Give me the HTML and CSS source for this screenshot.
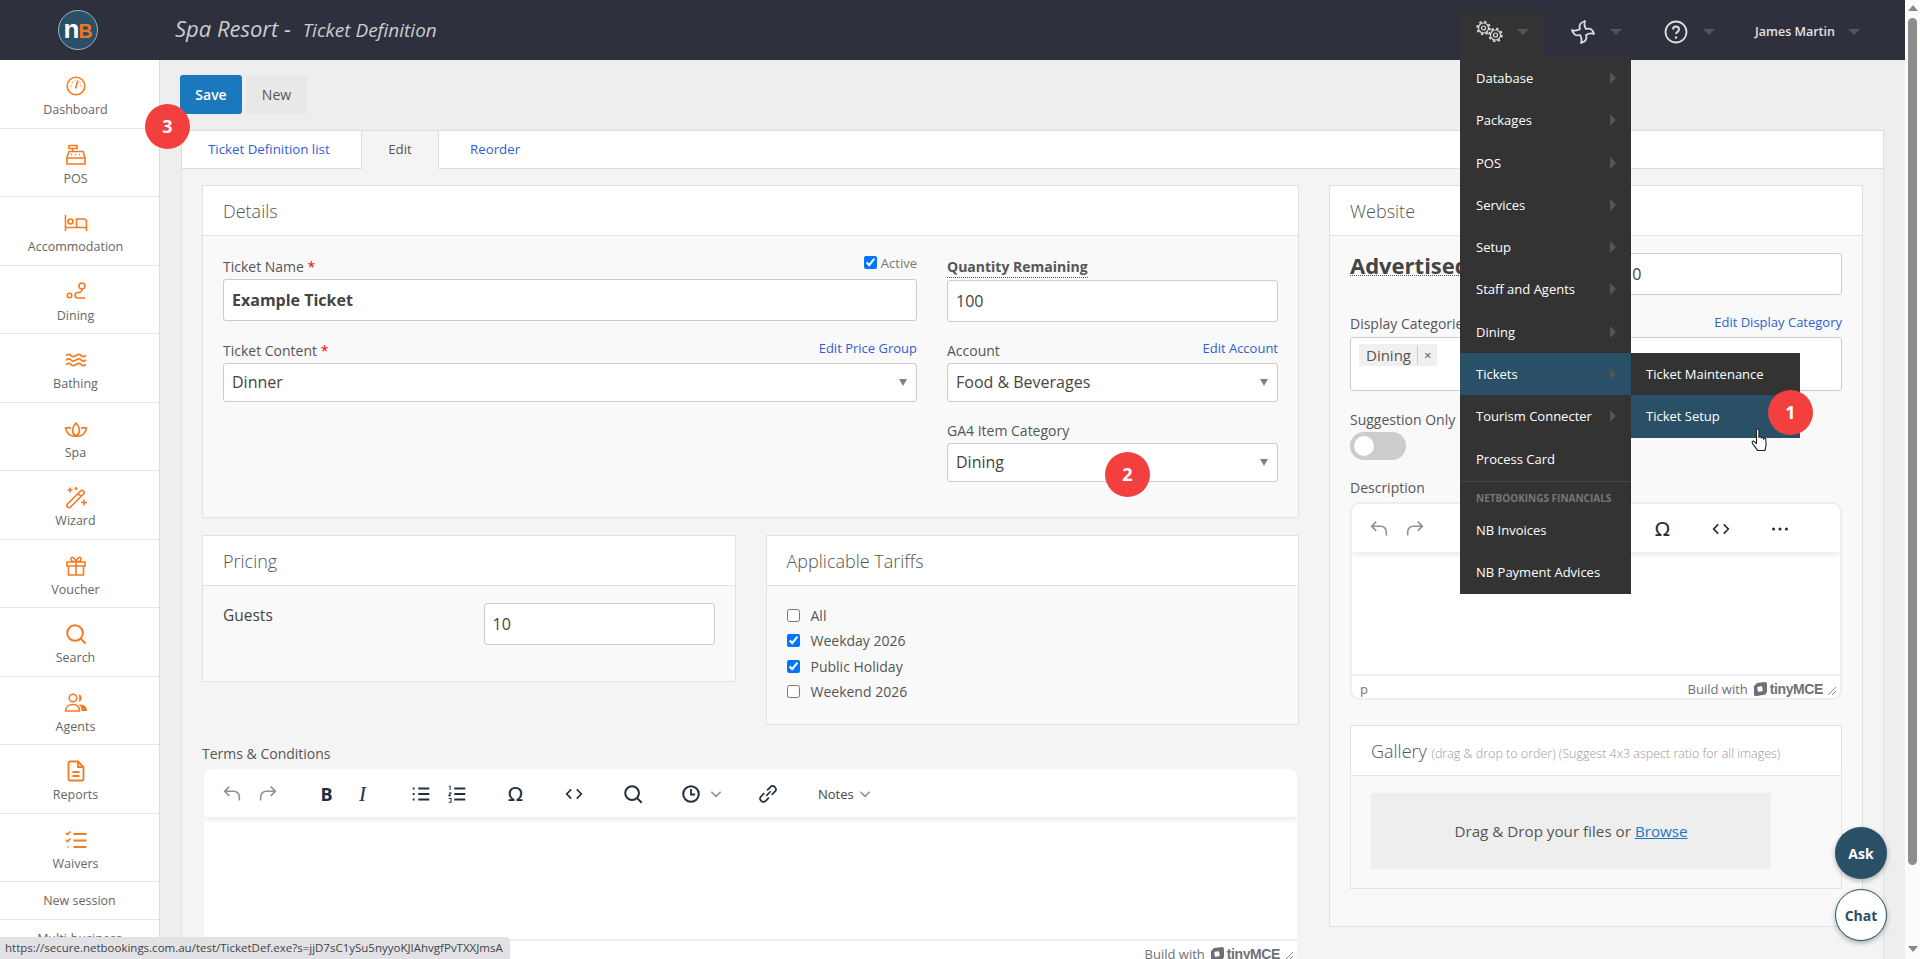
FILE: index.html
```html
<!DOCTYPE html>
<html>
<head>
    <title>Spa Resort - Ticket Definition</title>
    <meta name="viewport" content="width=device-width, initial-scale=1">
    <link rel="stylesheet" href="styles.css">
</head>
<body>
<div class="app">
    <div class="page">
        <header class="topbar">
            <div class="logo"><span class="logo-n">n</span><span class="logo-b">B</span></div>
            <div class="page-title"><span class="title-big">Spa Resort - </span><span class="title-small">Ticket Definition</span></div>
            <nav class="top-nav">
                <div class="top-item top-gears">
                    <svg width="27" height="24" viewBox="0 0 27 24" fill="none" stroke="#ddd"><circle cx="7.500" cy="8" r="6.400" stroke-width="1.600" stroke-dasharray="2.500 2.500"/><circle cx="7.500" cy="8" r="5" stroke-width="1.200"/><circle cx="7.500" cy="8" r="2" stroke-width="1.200"/><circle cx="19.500" cy="15" r="6.400" stroke-width="1.600" stroke-dasharray="2.500 2.500"/><circle cx="19.500" cy="15" r="5" stroke-width="1.200"/><circle cx="19.500" cy="15" r="2" stroke-width="1.200"/></svg>
                    <span class="caret"></span>
                </div>
                <div class="top-item top-fan">
                    <svg width="24" height="24" viewBox="0 0 24 24" fill="none" stroke="#ddd" stroke-width="1.800" stroke-linejoin="round"><path d="M9 9Q7 3 14 1Q12.500 5 15 9Q21 7 23 14Q19 12.500 15 15Q17 21 10 23Q11.500 19 9 15Q3 17 1 10Q5 11.500 9 9Z"/></svg>
                    <span class="caret"></span>
                </div>
                <div class="top-item top-help">
                    <svg width="24" height="24" viewBox="0 0 24 24" fill="none" stroke="#ddd" stroke-width="1.800"><circle cx="12" cy="12" r="10.500"/><path d="M9 9.500c0-4 6-4 6 0 0 2.500-3 2.200-3 4.500" stroke-width="2"/><circle cx="12" cy="17.500" r="1.200" fill="#ddd" stroke="none"/></svg>
                    <span class="caret"></span>
                </div>
                <div class="top-item top-user">
                    <span class="user-name">James Martin</span>
                    <span class="caret"></span>
                </div>
            </nav>
        </header>

        <div class="layout">
            <aside class="sidebar">
                <a class="nav-item">
                    <svg class="nav-icon" viewBox="0 0 24 24"><circle cx="12" cy="12" r="8.800"/><path d="M11.500 14.500l2.500-8M6.500 12h1M16.500 12h1M8 8l.7.7M11.500 5.800v.7M16.500 8l-.5.5"/></svg>
                    <span>Dashboard</span>
                </a>
                <a class="nav-item">
                    <svg class="nav-icon" viewBox="0 0 24 24"><path d="M5 2.500h8v3H5zM8.500 5.500v3M5 8.500h14l2 6v6.500H3v-6.500zM3 15h18M7 11.500h1M11 11.500h1M15 11.500h1"/></svg>
                    <span>POS</span>
                </a>
                <a class="nav-item">
                    <svg class="nav-icon" viewBox="0 0 24 24"><path d="M1.500 4v16M1.500 16.500h21M22.500 20v-9a3 3 0 0 0-3-3h-7v8.500"/><circle cx="6.500" cy="10.500" r="2.500"/></svg>
                    <span>Accommodation</span>
                </a>
                <a class="nav-item">
                    <svg class="nav-icon" viewBox="0 0 24 24"><circle cx="18" cy="6" r="3"/><circle cx="5.500" cy="15.500" r="2.200"/><path d="M18 9c0 3-2 3.500-4 3.500s-3 1.200-3 2.700 1 2.800 3 2.800h7"/></svg>
                    <span>Dining</span>
                </a>
                <a class="nav-item">
                    <svg class="nav-icon" viewBox="0 0 24 24"><path d="M2 7.500c2.500-1.500 4-1.500 5 0s2.500 1.500 5 0 4-1.500 5 0 2.500 1.500 5 0M2 12c2.500-1.500 4-1.500 5 0s2.500 1.500 5 0 4-1.500 5 0 2.500 1.500 5 0M2 16.500c2.500-1.500 4-1.500 5 0s2.500 1.500 5 0 4-1.500 5 0 2.500 1.500 5 0"/></svg>
                    <span>Bathing</span>
                </a>
                <a class="nav-item">
                    <svg class="nav-icon" viewBox="0 0 24 24"><path d="M12 19c-4-2-5-8 0-13 5 5 4 11 0 13zM12 19c-5 1-9.500-2-10.500-8 2-.5 4-.5 5.500.3M12 19c5 1 9.500-2 10.500-8-2-.5-4-.5-5.500.3"/></svg>
                    <span>Spa</span>
                </a>
                <a class="nav-item">
                    <svg class="nav-icon" viewBox="0 0 24 24"><path d="M3.500 19l13-13a2 2 0 0 1 3 3l-13 13a2 2 0 0 1-3-3zM14 8.500l3 3M6 2.500v5M3.500 5h5M12 2v3M10.500 3.500h3M20 14.500v6M17 17.500h6"/></svg>
                    <span>Wizard</span>
                </a>
                <a class="nav-item">
                    <svg class="nav-icon" viewBox="0 0 24 24"><path d="M3 8h18v4H3zM4.500 12v9h15v-9M12 8v13M12 8C8 8 6.500 6.500 7 4.500S10.500 2.500 12 8zM12 8c4 0 5.500-1.500 5-3.500S13.500 2.500 12 8z"/></svg>
                    <span>Voucher</span>
                </a>
                <a class="nav-item">
                    <svg class="nav-icon" viewBox="0 0 24 24"><circle cx="11" cy="11" r="7.800" stroke-width="2"/><path d="M16.500 16.500l5 5" stroke-width="2"/></svg>
                    <span>Search</span>
                </a>
                <a class="nav-item">
                    <svg class="nav-icon" viewBox="0 0 24 24"><circle cx="9" cy="7" r="3.800"/><path d="M1.500 20c0-4 3-6.500 7.500-6.500s6.500 2.500 6.500 6.500z"/><path class="solid" d="M14.500 3.300a3.800 3.800 0 0 1 0 7.500c1-2 1-5.500 0-7.500zM17 13.500c3.500.3 6 2.500 6 6.500h-5.500c0-2.500-.5-5-2.500-6.500z"/></svg>
                    <span>Agents</span>
                </a>
                <a class="nav-item">
                    <svg class="nav-icon" viewBox="0 0 24 24"><path d="M6 2.500h8l5.500 5.500v12a1.500 1.500 0 0 1-1.500 1.500H6A1.500 1.500 0 0 1 4.500 20V4A1.500 1.500 0 0 1 6 2.500zM14 2.500V8h5.500M8.500 13h7M8.500 17h7" stroke-width="1.800"/></svg>
                    <span>Reports</span>
                </a>
                <a class="nav-item">
                    <svg class="nav-icon" viewBox="0 0 24 24"><path d="M9.500 6h13M9.500 12.500h13M9.500 19h13M3.500 19h1" stroke-width="2"/><path d="M2 5l1.500 1.500L6.500 3.500M2 12l1.500 1.500 3-3"/></svg>
                    <span>Waivers</span>
                </a>
                <a class="nav-link">New session</a>
                <a class="nav-link">Multi-business</a>
            </aside>

            <main class="main">
                <div class="actions">
                    <button class="btn btn-primary">Save</button>
                    <button class="btn btn-plain">New</button>
                </div>
                <div class="tabs">
                    <a class="tab tab-link tab-first">Ticket Definition list</a>
                    <a class="tab tab-active">Edit</a>
                    <a class="tab tab-link tab-last">Reorder</a>
                </div>
                <div class="tab-panel">
                    <div class="col-left">
                        <section class="card">
                            <h3 class="card-head">Details</h3>
                            <div class="card-body details-grid">
                                <div class="stack">
                                    <div class="label-row">
                                        <label>Ticket Name <b class="req">*</b></label>
                                        <label class="check-small"><input type="checkbox" checked> Active</label>
                                    </div>
                                    <input class="input input-bold" type="text" value="Example Ticket">
                                    <div class="label-row row-spaced">
                                        <label>Ticket Content <b class="req">*</b></label>
                                        <a class="edit-link">Edit Price Group</a>
                                    </div>
                                    <div class="select">Dinner</div>
                                </div>
                                <div class="stack">
                                    <div class="label-row row-qty">
                                        <label class="label-strong">Quantity Remaining</label>
                                    </div>
                                    <input class="input" type="text" value="100">
                                    <div class="label-row row-account">
                                        <label>Account</label>
                                        <a class="edit-link">Edit Account</a>
                                    </div>
                                    <div class="select">Food &amp; Beverages</div>
                                    <div class="label-row row-ga4">
                                        <label>GA4 Item Category</label>
                                    </div>
                                    <div class="select">Dining</div>
                                </div>
                            </div>
                        </section>

                        <div class="card-row">
                            <section class="card">
                                <h3 class="card-head">Pricing</h3>
                                <div class="card-body pricing-body">
                                    <span class="guests">Guests</span>
                                    <input class="input input-guests" type="text" value="10">
                                </div>
                            </section>
                            <section class="card">
                                <h3 class="card-head">Applicable Tariffs</h3>
                                <div class="card-body tariffs-body">
                                    <label class="tariff"><input type="checkbox"> All</label>
                                    <label class="tariff"><input type="checkbox" checked> Weekday 2026</label>
                                    <label class="tariff"><input type="checkbox" checked> Public Holiday</label>
                                    <label class="tariff"><input type="checkbox"> Weekend 2026</label>
                                </div>
                            </section>
                        </div>

                        <div class="terms-label">Terms &amp; Conditions</div>
                        <div class="editor">
                            <div class="toolbar">
                                <div class="tb-group">
                                    <span class="tb-btn"><svg class="tb-icon tb-dim" viewBox="0 0 24 24"><path d="M9 4L4 9l5 5M4 9h10a6 6 0 0 1 6 6v4"/></svg></span>
                                    <span class="tb-btn"><svg class="tb-icon tb-dim" viewBox="0 0 24 24"><path d="M15 4l5 5-5 5M20 9H10a6 6 0 0 0-6 6v4"/></svg></span>
                                </div>
                                <div class="tb-group">
                                    <span class="tb-btn tb-bold">B</span>
                                    <span class="tb-btn tb-italic">I</span>
                                </div>
                                <div class="tb-group">
                                    <span class="tb-btn"><svg class="tb-icon" viewBox="0 0 24 24"><path d="M9 6h12M9 12h12M9 18h12M3 6h2M3 12h2M3 18h2" stroke-width="2.200"/></svg></span>
                                    <span class="tb-btn"><svg class="tb-icon" viewBox="0 0 24 24"><path d="M9 6h12M9 12h12M9 18h12" stroke-width="2.200"/><path d="M3 3.500h1.500v4M3 11h2.500L3 14h2.500M3 17h2.500v4H3" stroke-width="1.100"/></svg></span>
                                </div>
                                <div class="tb-group"><span class="tb-btn tb-omega">Ω</span></div>
                                <div class="tb-group">
                                    <span class="tb-btn"><svg class="tb-icon" viewBox="0 0 24 24"><path d="M9 7l-5 5 5 5M15 7l5 5-5 5" stroke-width="1.800"/></svg></span>
                                </div>
                                <div class="tb-group">
                                    <span class="tb-btn"><svg class="tb-icon" viewBox="0 0 24 24"><circle cx="11" cy="11" r="7.500" stroke-width="2.200"/><path d="M16.500 16.500l5 5" stroke-width="2.200"/></svg></span>
                                </div>
                                <div class="tb-group">
                                    <span class="tb-btn"><svg class="tb-icon" viewBox="0 0 24 24"><circle cx="12" cy="12" r="8.500" stroke-width="2.200"/><path d="M12 6.500V12.500h4.500" stroke-width="2"/></svg></span>
                                    <svg class="tb-chevron tb-chevron-clock" viewBox="0 0 12 12"><path d="M2 4l4 4 4-4"/></svg>
                                </div>
                                <div class="tb-group">
                                    <span class="tb-btn"><svg class="tb-icon" viewBox="0 0 24 24"><path d="M10 14l5-5M8 11l-3.500 3.500a3.500 3.500 0 0 0 5 5L13 16M16 13l3.500-3.500a3.500 3.500 0 0 0-5-5L11 8" stroke-width="1.800"/></svg></span>
                                </div>
                                <div class="tb-notes">Notes <svg class="tb-chevron" viewBox="0 0 12 12"><path d="M2 4l4 4 4-4"/></svg></div>
                            </div>
                            <div class="editor-body"></div>
                            <div class="editor-status">
                                <span class="path-tag"></span>
                                <span class="build-with">Build with</span>
                                <svg class="tiny-logo" viewBox="0 0 14 14"><path d="M4 1l8-1a2 2 0 0 1 2 2v8l-1.500 2.500L4 14a2 2 0 0 1-3-2V4z"/><rect x="4.500" y="4.500" width="5" height="5" rx="1" fill="#fff" transform="rotate(-10 7 7)"/></svg>
                                <span class="tiny-name">tinyMCE</span>
                                <svg class="resize" viewBox="0 0 10 10"><path d="M1 9l8-8M5 9l4-4"/></svg>
                            </div>
                        </div>
                    </div>

                    <section class="card col-right">
                        <h3 class="card-head">Website</h3>
                        <div class="card-body website-body">
                            <div class="advertised">
                                <span class="advertised-label">Advertised Price</span>
                                <input class="input input-price" type="text" value="10">
                            </div>
                            <div class="label-row row-cats">
                                <label>Display Categories</label>
                                <a class="edit-link">Edit Display Category</a>
                            </div>
                            <div class="multi">
                                <span class="tag"><span class="tag-text">Dining</span><span class="tag-x">×</span></span>
                            </div>
                            <div class="label-row row-suggest"><label>Suggestion Only</label></div>
                            <span class="toggle"><span class="knob"></span></span>
                            <div class="label-row row-desc"><label>Description</label></div>
                            <div class="editor">
                                <div class="toolbar">
                                    <div class="tb-group">
                                        <span class="tb-btn"><svg class="tb-icon tb-dim" viewBox="0 0 24 24"><path d="M9 4L4 9l5 5M4 9h10a6 6 0 0 1 6 6v4"/></svg></span>
                                        <span class="tb-btn"><svg class="tb-icon tb-dim" viewBox="0 0 24 24"><path d="M15 4l5 5-5 5M20 9H10a6 6 0 0 0-6 6v4"/></svg></span>
                                    </div>
                                    <div class="tb-group">
                                        <span class="tb-btn tb-bold">B</span>
                                        <span class="tb-btn tb-italic">I</span>
                                    </div>
                                    <div class="tb-group">
                                        <span class="tb-btn"></span>
                                        <span class="tb-btn"></span>
                                    </div>
                                    <div class="tb-group"><span class="tb-btn tb-omega">Ω</span></div>
                                    <div class="tb-group">
                                        <span class="tb-btn"><svg class="tb-icon" viewBox="0 0 24 24"><path d="M9 7l-5 5 5 5M15 7l5 5-5 5" stroke-width="1.800"/></svg></span>
                                    </div>
                                    <div class="tb-group">
                                        <span class="tb-btn"><svg class="tb-icon" viewBox="0 0 24 24"><circle cx="5" cy="12" r="1.700" class="solid"/><circle cx="12" cy="12" r="1.700" class="solid"/><circle cx="19" cy="12" r="1.700" class="solid"/></svg></span>
                                    </div>
                                </div>
                                <div class="editor-body"></div>
                                <div class="editor-status">
                                    <span class="path-tag">p</span>
                                    <span class="build-with">Build with</span>
                                    <svg class="tiny-logo" viewBox="0 0 14 14"><path d="M4 1l8-1a2 2 0 0 1 2 2v8l-1.500 2.500L4 14a2 2 0 0 1-3-2V4z"/><rect x="4.500" y="4.500" width="5" height="5" rx="1" fill="#fff" transform="rotate(-10 7 7)"/></svg>
                                    <span class="tiny-name">tinyMCE</span>
                                    <svg class="resize" viewBox="0 0 10 10"><path d="M1 9l8-8M5 9l4-4"/></svg>
                                </div>
                            </div>
                            <section class="card gallery">
                                <h3 class="card-head">Gallery <small>(drag &amp; drop to order) (Suggest 4x3 aspect ratio for all images)</small></h3>
                                <div class="card-body gallery-body">
                                    <div class="dropzone">Drag &amp; Drop your files or&nbsp;<a class="browse">Browse</a></div>
                                </div>
                            </section>
                        </div>
                    </section>
                </div>
            </main>
        </div>
    </div>

    <div class="scrollbar">
        <span class="sb-up"></span>
        <span class="sb-thumb"></span>
        <span class="sb-down"></span>
    </div>

    <!-- open admin menu -->
    <div class="menu">
        <a class="menu-item has-sub">Database</a>
        <a class="menu-item has-sub">Packages</a>
        <a class="menu-item has-sub">POS</a>
        <a class="menu-item has-sub">Services</a>
        <a class="menu-item has-sub">Setup</a>
        <a class="menu-item has-sub">Staff and Agents</a>
        <a class="menu-item has-sub">Dining</a>
        <a class="menu-item has-sub menu-on">Tickets</a>
        <a class="menu-item has-sub">Tourism Connecter</a>
        <a class="menu-item">Process Card</a>
        <div class="menu-heading">NETBOOKINGS FINANCIALS</div>
        <a class="menu-item">NB Invoices</a>
        <a class="menu-item">NB Payment Advices</a>
        <div class="submenu">
            <a class="menu-item">Ticket Maintenance</a>
            <a class="menu-item menu-on">Ticket Setup</a>
        </div>
    </div>

    <span class="badge badge-1">1</span>
    <span class="badge badge-2">2</span>
    <span class="badge badge-3">3</span>

    <svg class="hand" viewBox="0 0 18 25" fill="#fff" stroke="#222" stroke-width="1.100" stroke-linejoin="round"><path d="M5.500 2.200c0-1.600 2.400-1.600 2.400 0v7.300c0-1.500 2.300-1.500 2.300 0v.8c0-1.400 2.300-1.400 2.300 0v.9c0-1.300 2.300-1.300 2.300 0 .6 4 .6 7-.8 11.300H6.500C5 19.500 2.500 18 1.300 15c-.7-1.600 1-2.500 2-1.300l2.200 2z"/></svg>

    <button class="fab fab-ask">Ask</button>
    <button class="fab fab-chat">Chat</button>

    <div class="status-url">https://secure.netbookings.com.au/test/TicketDef.exe?s=jjD7sC1ySu5nyyoKJIAhvgfPvTXXJmsA</div>
</div>
</body>
</html>
```

FILE: styles.css
```css
* {
    box-sizing: border-box;
}
html, body {
    margin: 0;
    height: 100%;
    overflow: hidden;
}
body {
    font-family: "Open Sans", "Liberation Sans", sans-serif;
    font-size: 13px;
    color: #555;
    background: #eee;
}
.app {
    position: relative;
    display: flex;
    width: 1920px;
    height: 959px;
    overflow: hidden;
}
.page {
    width: 1905px;
    display: flex;
    flex-direction: column;
}

/* top bar */
.topbar {
    flex: none;
    height: 60px;
    background: #2e303d;
    display: flex;
}
.logo {
    width: 40px;
    height: 40px;
    margin: 10px 0 0 58px;
    border-radius: 50%;
    background: #2a5068;
    border: 1px solid #9fb2bf;
    display: flex;
    justify-content: center;
    align-items: baseline;
    font-family: "Liberation Sans", sans-serif;
    font-weight: bold;
    line-height: 36px;
}
.logo-n {
    color: #fff;
    font-size: 26px;
}
.logo-b {
    color: #ef7622;
    font-size: 19.5px;
    margin-left: -1px;
}
.page-title {
    margin-left: 77px;
    line-height: 57px;
    font-style: italic;
    color: #ccc;
}
.title-big { font-size: 22px; }
.title-small {
    font-size: 19px;
    margin-left: 6px;
}
.top-nav {
    margin-left: auto;
    display: flex;
    align-self: flex-end;
    padding-right: 45px;
}
.top-item {
    height: 50px;
    display: flex;
    align-items: center;
    padding-bottom: 6px;
}
.top-gears {
    width: 84px;
    padding-left: 16px;
    background: #333;
}
.top-gears .caret { margin-left: 14px; }
.top-fan { padding-left: 27px; }
.top-fan .caret { margin-left: 15px; }
.top-help { padding-left: 42px; }
.top-help .caret { margin-left: 15px; }
.top-user { padding-left: 40px; }
.top-user .caret { margin-left: 13px; }
.user-name {
    width: 80px;
    font-size: 12.5px;
    font-weight: 600;
    color: #e2e2e2;
    white-space: nowrap;
    margin-top: -2px;
}
.caret {
    width: 0;
    height: 0;
    border-left: 6px solid transparent;
    border-right: 6px solid transparent;
    border-top: 6px solid #555;
}

/* left nav */
.layout {
    flex: 1;
    min-height: 0;
    display: flex;
}
.sidebar {
    flex: none;
    width: 160px;
    background: #fff;
    border-right: 1px solid #ddd;
    overflow: hidden;
}
.nav-item {
    height: 68.5px;
    padding: 14px 8px 0 0;
    border-bottom: 1.5px solid #e8e4e8;
    display: flex;
    flex-direction: column;
    align-items: center;
    font-size: 12.5px;
    line-height: 18px;
    color: #666;
}
.nav-icon {
    width: 24px;
    height: 24px;
    margin-bottom: 3px;
    fill: none;
    stroke: #f47b20;
    stroke-width: 1.6;
}
.nav-icon .solid {
    fill: #f47b20;
    stroke: none;
}
.nav-link {
    display: block;
    height: 38px;
    line-height: 37px;
    text-align: center;
    font-size: 12.5px;
    color: #666;
    border-bottom: 1.5px solid #e8e4e8;
}

/* main */
.main {
    flex: 1;
    min-width: 0;
    padding: 15px 21px 0 20px;
    background: #eee;
    display: flex;
    flex-direction: column;
}
.actions {
    display: flex;
    gap: 4px;
    margin-bottom: 16px;
}
.btn {
    height: 39px;
    border: none;
    border-radius: 3px;
    font-family: inherit;
    font-size: 14px;
}
.btn-primary {
    width: 62px;
    background: #1a78bd;
    color: #fff;
    font-weight: 600;
}
.btn-plain {
    width: 61px;
    background: #e8e8e8;
    color: #555;
}
.tabs {
    flex: none;
    height: 39px;
    margin-left: 1px;
    display: flex;
    background: #fff;
    border: 1px solid #ddd;
    border-bottom: none;
}
.tab {
    line-height: 37px;
    font-size: 13.3px;
    border-right: 1px solid #ddd;
    border-bottom: 1px solid #ddd;
}
.tab-first {
    width: 180px;
    padding-left: 26px;
}
.tab-link { color: #2f5fd0; }
.tab-active {
    width: 77px;
    text-align: center;
    color: #555;
    background: #f4f4f4;
    border-bottom-color: #f4f4f4;
}
.tab-last {
    flex: 1;
    padding-left: 31px;
    border-right: none;
}
.tab-panel {
    flex: 1;
    margin-left: 1px;
    min-height: 0;
    overflow: hidden;
    padding: 16px 21px 0 20px;
    background: #f4f4f4;
    border-left: 1px solid #e2e2e2;
    border-right: 1px solid #e2e2e2;
    display: flex;
    gap: 30px;
    align-items: flex-start;
}
.col-left {
    flex: none;
    width: 1097px;
}
.col-right {
    flex: none;
    width: 534px;
}

/* cards */
.card {
    background: #fff;
    border: 1px solid #e2e2e2;
}
.card-head {
    margin: 0;
    height: 50px;
    padding-left: 20px;
    line-height: 50px;
    font-size: 18px;
    font-weight: 300;
    color: #555;
    border-bottom: 1px solid #e2e2e2;
    background: #fff;
}
.card-head small {
    font-size: 12.5px;
    color: #999;
}
.card-body {
    background: #f9f9f9;
}
.details-grid {
    display: grid;
    grid-template-columns: 694px 331px;
    column-gap: 30px;
    padding: 20px 20px 35px;
}
.stack {
    display: flex;
    flex-direction: column;
}
.label-row {
    height: 23px;
    padding-bottom: 2px;
    display: flex;
    justify-content: space-between;
    align-items: center;
    font-size: 14px;
    color: #555;
}
.req {
    color: #f00;
    font-weight: normal;
}
.check-small {
    font-size: 13px;
    color: #777;
    display: flex;
    align-items: center;
    gap: 2px;
    margin-top: -7px;
}
.check-small input { margin: -2px 2px 0 0; }
.label-strong {
    font-weight: 700;
    font-size: 14px;
    border-bottom: 1px dotted #555;
    line-height: 21px;
}
.edit-link {
    font-size: 13px;
    color: #2f5fd0;
    margin-top: -5px;
}
.row-spaced { margin-top: 19px; }
.row-qty { height: 24px; }
.row-account { margin-top: 18px; }
.row-ga4 { margin-top: 18px; }
.input {
    width: 100%;
    height: 42px;
    margin: 0;
    padding: 0 8px;
    border: 1px solid #ccc;
    border-radius: 3px;
    background: #fff;
    font-family: inherit;
    font-size: 16px;
    color: #444;
    outline: none;
}
.input-bold { font-weight: 700; }
.select {
    position: relative;
    height: 39px;
    padding-left: 8px;
    line-height: 37px;
    font-size: 16px;
    color: #444;
    background: #fff;
    border: 1px solid #ccc;
    border-radius: 3px;
}
.select::after {
    content: "";
    position: absolute;
    right: 9px;
    top: 15px;
    border-left: 4px solid transparent;
    border-right: 4px solid transparent;
    border-top: 7px solid #808080;
}
.card-row {
    display: flex;
    gap: 30px;
    align-items: flex-start;
    margin-top: 17px;
}
.card-row .card {
    flex: 1;
}
.pricing-body {
    display: flex;
    justify-content: space-between;
    padding: 17px 20px 36px 20px;
}
.guests {
    font-size: 15.5px;
    line-height: 24px;
    color: #444;
}
.input-guests { width: 231px; }
.tariffs-body {
    padding: 17px 20px 20px;
}
.tariff {
    height: 25.3px;
    display: flex;
    align-items: center;
    font-size: 14px;
    color: #555;
}
.tariff input { margin: 0 11px 0 0; }
.terms-label {
    margin-top: 19px;
    height: 19px;
    line-height: 19px;
    font-size: 14px;
}

/* tinymce editor */
.editor {
    border: 2px solid #eee;
    border-radius: 10px;
    background: #fff;
    overflow: hidden;
}
.col-left > .editor {
    border-color: #f4f4f4;
    margin-top: 4px;
}
.toolbar {
    height: 48px;
    display: flex;
    align-items: center;
    padding: 2px 0 0 9px;
    box-shadow: 0 2px 6px rgba(0,0,0,0.1);
    position: relative;
}
.col-left .toolbar { padding-left: 10px; }
.tb-group {
    display: flex;
    align-items: center;
    margin-right: 22.5px;
}
.tb-btn {
    width: 36px;
    display: flex;
    justify-content: center;
    align-items: center;
    color: #222f3e;
}
.tb-icon {
    width: 22px;
    height: 22px;
    fill: none;
    stroke: #222f3e;
    stroke-width: 1.5;
}
.tb-icon .solid,
.tb-icon.solid {
    fill: #222f3e;
    stroke: none;
}
.tb-dim {
    stroke: #8a9097;
    stroke-width: 1.7;
}
.tb-bold {
    font-weight: 700;
    font-size: 18px;
    line-height: 22px;
}
.tb-italic {
    font-family: "Liberation Serif", serif;
    font-style: italic;
    font-size: 21px;
    line-height: 22px;
}
.tb-omega {
    font-family: "DejaVu Sans", sans-serif;
    font-size: 20px;
    line-height: 22px;
}
.tb-chevron {
    width: 14px;
    height: 14px;
    margin-left: 4px;
    fill: none;
    stroke: #8a9097;
    stroke-width: 1.3;
}
.tb-chevron-clock { margin: 0 4px 0 0; }
.tb-notes {
    display: flex;
    align-items: center;
    padding-left: 10px;
    font-size: 13px;
    color: #444;
}
.editor-body {
    height: 122px;
}
.editor-status {
    height: 24px;
    padding: 4px 3px 0 8px;
    border-top: 2px solid #eee;
    display: flex;
    align-items: center;
    font-size: 13px;
    color: #6d7176;
}
.path-tag { margin-right: auto; }
.build-with { margin-right: 5px; }
.tiny-logo {
    width: 14px;
    height: 14px;
    fill: #6d7176;
}
.tiny-name {
    margin-left: 3px;
    font-family: "Liberation Sans", sans-serif;
    font-weight: 700;
    font-size: 14px;
    letter-spacing: -0.4px;
}
.resize {
    width: 10px;
    height: 10px;
    margin: 4px 0 0 4px;
    fill: none;
    stroke: #8a9097;
}

/* website card */
.website-body {
    padding: 17px 20px 37px;
}
.advertised {
    height: 42px;
    display: flex;
    justify-content: space-between;
    align-items: flex-start;
}
.advertised-label {
    font-size: 22px;
    font-weight: 700;
    color: #444;
    white-space: nowrap;
    border-bottom: 1px dotted #555;
    line-height: 19px;
    margin-top: 3px;
}
.input-price { width: 228px; }
.row-cats {
    margin-top: 15px;
    height: 27px;
    padding-bottom: 0;
}
.row-cats .edit-link { margin-top: -4px; }
.multi {
    height: 54px;
    padding: 6px 8px;
    background: #fff;
    border: 1px solid #ccc;
    border-radius: 3px;
}
.tag {
    display: inline-flex;
    align-items: center;
    height: 22px;
    padding: 0 6px 0 7px;
    background: #f0f0f0;
    font-size: 15px;
    color: #555;
}
.tag-text {
    padding-right: 6px;
    border-right: 1px solid #ccc;
    line-height: 19px;
}
.tag-x {
    margin-left: 6px;
    font-size: 13px;
}
.row-suggest {
    margin-top: 17px;
    padding-bottom: 0;
}
.toggle {
    display: block;
    width: 56px;
    height: 28px;
    margin-top: 1px;
    padding: 4px;
    background: #ccc;
    border-radius: 14px;
}
.knob {
    display: block;
    width: 20px;
    height: 20px;
    border-radius: 50%;
    background: #fff;
}
.row-desc {
    margin-top: 16px;
    height: 26px;
    padding-bottom: 3px;
}
.gallery {
    margin-top: 25px;
}
.gallery-body {
    padding: 17px 70px 19px 20px;
}
.dropzone {
    height: 76px;
    background: #eee;
    display: flex;
    justify-content: center;
    align-items: center;
    font-size: 15.2px;
    color: #555;
}
.browse {
    color: #1a78bd;
    text-decoration: underline;
}

/* scrollbar */
.scrollbar {
    flex: none;
    width: 15px;
    background: #fbfbfb;
    display: flex;
    flex-direction: column;
    align-items: center;
}
.sb-up {
    margin-top: 5px;
    border-left: 5px solid transparent;
    border-right: 5px solid transparent;
    border-bottom: 6px solid #888;
}
.sb-thumb {
    width: 9px;
    height: 847px;
    margin-top: 7px;
    border-radius: 5px;
    background: #8d8d8d;
}
.sb-down {
    margin-top: auto;
    margin-bottom: 7px;
    border-left: 5px solid transparent;
    border-right: 5px solid transparent;
    border-top: 6px solid #888;
}

/* dropdown menu */
.menu {
    position: absolute;
    left: 1460px;
    top: 57px;
    width: 171px;
    background: #333;
}
.menu-item {
    position: relative;
    display: block;
    height: 42.3px;
    padding-left: 16px;
    line-height: 43px;
    font-size: 13px;
    color: #fff;
    white-space: nowrap;
}
.has-sub::after {
    content: "";
    position: absolute;
    right: 15px;
    top: 15px;
    border-top: 6px solid transparent;
    border-bottom: 6px solid transparent;
    border-left: 6px solid #555;
}
.menu-on {
    background: #2a5068;
}
.menu-heading {
    height: 28px;
    margin-top: 1px;
    padding-left: 16px;
    line-height: 33px;
    border-top: 1px solid #444;
    font-size: 10px;
    font-weight: 700;
    color: #777;
    white-space: nowrap;
}
.submenu {
    position: absolute;
    left: 171px;
    top: 296px;
    width: 169px;
    background: #333;
}
.submenu .menu-item { padding-left: 15px; }

/* callout numbers */
.badge {
    position: absolute;
    width: 45px;
    height: 45px;
    border-radius: 50%;
    background: #f43f3f;
    color: #fff;
    font-size: 18px;
    font-weight: 700;
    line-height: 45px;
    text-align: center;
}
.badge-1 { left: 1768px; top: 390px; }
.badge-2 { left: 1105px; top: 452px; }
.badge-3 { left: 145px; top: 104px; }
.hand {
    position: absolute;
    left: 1751px;
    top: 428px;
    width: 18px;
    height: 25px;
}
.fab {
    position: absolute;
    left: 1835px;
    width: 52px;
    height: 52px;
    border-radius: 50%;
    font-family: inherit;
    font-size: 14px;
    font-weight: 700;
    box-shadow: 0 2px 5px rgba(0,0,0,0.3);
}
.fab-ask {
    top: 827px;
    background: #2a5068;
    border: none;
    color: #fff;
}
.fab-chat {
    top: 889px;
    background: #fff;
    border: 1.5px solid #2a5068;
    color: #2a5068;
}
.status-url {
    position: absolute;
    left: 0;
    bottom: 0;
    width: 510px;
    height: 22px;
    padding-left: 5px;
    line-height: 22px;
    background: #e1e1e6;
    border-top-right-radius: 4px;
    font-size: 11.5px;
    color: #444;
    white-space: nowrap;
}
```
